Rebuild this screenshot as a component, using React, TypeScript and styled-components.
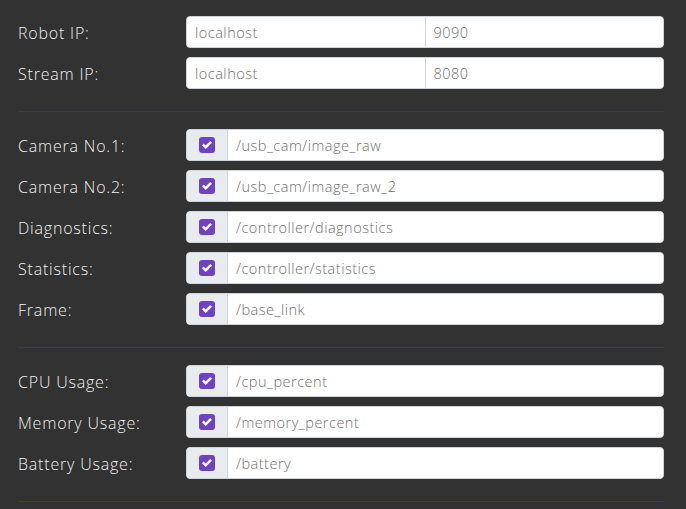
import { createGlobalStyle, styled } from "styled-components";

const GlobalStyle = createGlobalStyle`
    html, body {
        margin: 0;
        padding: 0;
        background-color: #323232;
    }
    * {
        box-sizing: border-box;
    }
`;

const Page = styled.div`
    padding: 16px 22px 0 18px;
    font-family: "Open Sans", "Noto Sans", sans-serif;
    height: 509px;
    overflow: hidden;
`;

const Section = styled.div`
    display: flex;
    flex-direction: column;
    gap: 9px;
`;

const Divider = styled.hr<{ $accent?: boolean }>`
    border: none;
    height: 1px;
    margin: 22px 0 17px 0;
    background-color: ${(p) => (p.$accent ? "#41345f" : "#3b3a4e")};
`;

const Row = styled.div`
    display: grid;
    grid-template-columns: 168px 1fr;
    align-items: center;
    height: 32px;
`;

const Label = styled.label`
    color: #f0f0f0;
    font-size: 16px;
    font-weight: 300;
    letter-spacing: 0.8px;
    padding-top: 2px;
`;

const Group = styled.div`
    display: flex;
    height: 32px;
    background-color: white;
    border: 1px solid #ced4da;
    border-radius: 4px;
    overflow: hidden;
`;

const Addon = styled.div`
    width: 41px;
    flex: none;
    display: flex;
    align-items: center;
    justify-content: center;
    background-color: #e9ecef;
    border-right: 1px solid #ced4da;
`;

const Check = styled.span`
    width: 16px;
    height: 16px;
    border-radius: 3px;
    background-color: #6f42c1;
    display: flex;
    align-items: center;
    justify-content: center;
    svg {
        width: 10px;
        height: 10px;
    }
`;

const Field = styled.input<{ $split?: boolean }>`
    flex: 1;
    min-width: 0;
    border: none;
    outline: none;
    padding: 0 8px;
    font-family: "Open Sans", "Noto Sans", sans-serif;
    font-size: 14.5px;
    font-weight: 300;
    letter-spacing: 0.5px;
    color: #707070;
    background: transparent;
    border-right: ${(p) => (p.$split ? "1px solid #ced4da" : "none")};
`;

const ipRows = [
    { label: "Robot IP:", host: "localhost", port: "9090" },
    { label: "Stream IP:", host: "localhost", port: "8080" },
];

const topicRows = [
    { label: "Camera No.1:", topic: "/usb_cam/image_raw" },
    { label: "Camera No.2:", topic: "/usb_cam/image_raw_2" },
    { label: "Diagnostics:", topic: "/controller/diagnostics" },
    { label: "Statistics:", topic: "/controller/statistics" },
    { label: "Frame:", topic: "/base_link" },
];

const usageRows = [
    { label: "CPU Usage:", topic: "/cpu_percent" },
    { label: "Memory Usage:", topic: "/memory_percent" },
    { label: "Battery Usage:", topic: "/battery" },
];

function TopicRow({ label, topic }: { label: string; topic: string }) {
    return (
        <Row>
            <Label>{label}</Label>
            <Group>
                <Addon>
                    <Check>
                        <svg viewBox="0 0 8 8">
                            <path fill="#fff" d="M6.564.75l-3.59 3.612-1.538-1.55L0 4.26l2.974 2.99L8 2.193z" />
                        </svg>
                    </Check>
                </Addon>
                <Field defaultValue={topic} />
            </Group>
        </Row>
    );
}

export default function App() {
    return (
        <>
            <GlobalStyle />
            <Page>
                <Section>
                    {ipRows.map((r) => (
                        <Row key={r.label}>
                            <Label>{r.label}</Label>
                            <Group>
                                <Field $split defaultValue={r.host} />
                                <Field defaultValue={r.port} />
                            </Group>
                        </Row>
                    ))}
                </Section>
                <Divider />
                <Section>
                    {topicRows.map((r) => (
                        <TopicRow key={r.label} {...r} />
                    ))}
                </Section>
                <Divider />
                <Section>
                    {usageRows.map((r) => (
                        <TopicRow key={r.label} {...r} />
                    ))}
                </Section>
                <Divider $accent />
            </Page>
        </>
    );
}
